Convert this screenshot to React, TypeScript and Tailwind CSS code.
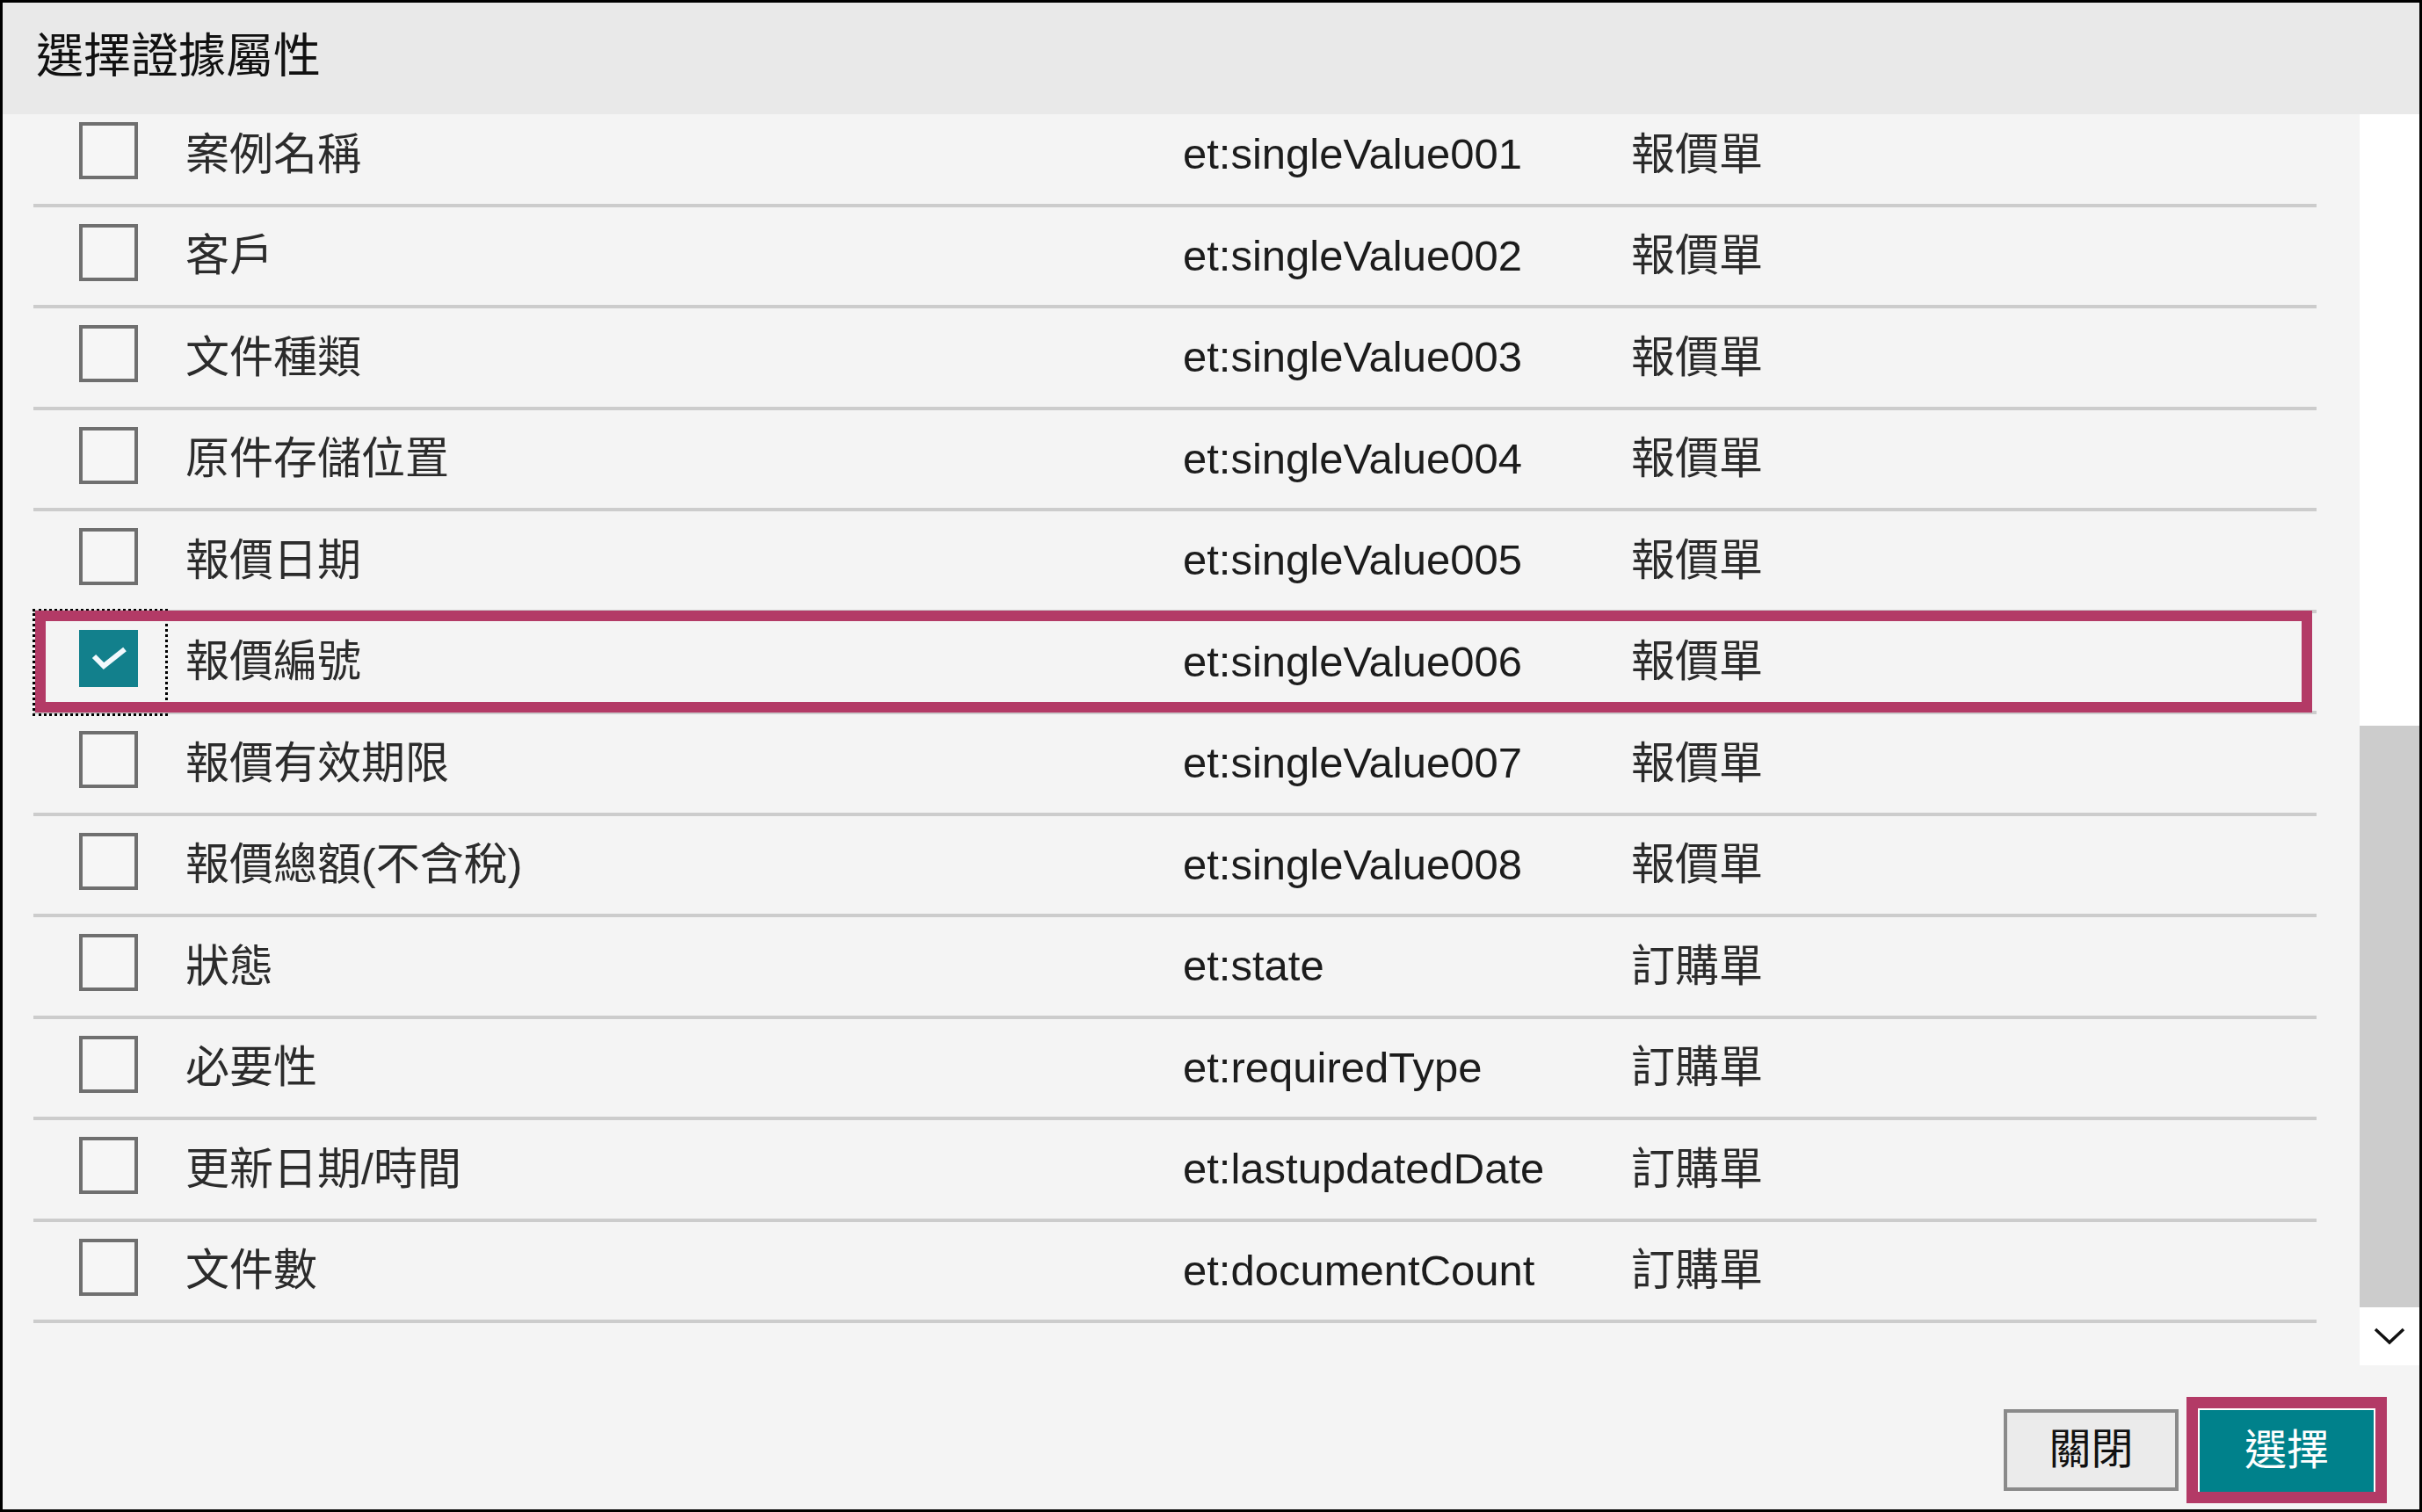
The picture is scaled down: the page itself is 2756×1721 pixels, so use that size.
import React from "react";

type Row = { name: string; key: string; doc: string; checked?: boolean };

const rows: Row[] = [
  { name: "案例名稱", key: "et:singleValue001", doc: "報價單" },
  { name: "客戶", key: "et:singleValue002", doc: "報價單" },
  { name: "文件種類", key: "et:singleValue003", doc: "報價單" },
  { name: "原件存儲位置", key: "et:singleValue004", doc: "報價單" },
  { name: "報價日期", key: "et:singleValue005", doc: "報價單" },
  { name: "報價編號", key: "et:singleValue006", doc: "報價單", checked: true },
  { name: "報價有效期限", key: "et:singleValue007", doc: "報價單" },
  { name: "報價總額(不含稅)", key: "et:singleValue008", doc: "報價單" },
  { name: "狀態", key: "et:state", doc: "訂購單" },
  { name: "必要性", key: "et:requiredType", doc: "訂購單" },
  { name: "更新日期/時間", key: "et:lastupdatedDate", doc: "訂購單" },
  { name: "文件數", key: "et:documentCount", doc: "訂購單" },
];

function Checkbox({ checked }: { checked?: boolean }) {
  if (checked) {
    return (
      <span className="block h-[65px] w-[67px] bg-[#12808c]">
        <svg width="67" height="65" viewBox="0 0 67 65">
          <polyline points="17,30 28,41 52,22" fill="none" stroke="#f2f9fd" strokeWidth="6" />
        </svg>
      </span>
    );
  }
  return <span className="block h-[65px] w-[67px] border-4 border-[#6f6f6f] bg-[#f6f6f6]" />;
}

function PropertyRow({ row }: { row: Row }) {
  return (
    <div className="relative grid h-[115.5px] grid-cols-[173px_1135px_510px_1fr] items-center border-b-4 border-[#cccccc]">
      <div className="self-start pl-[52px] pt-[19px]">
        <Checkbox checked={row.checked} />
      </div>
      <div className="text-[50px] leading-none whitespace-nowrap text-[#2b2b2b]">{row.name}</div>
      <div className="text-[49px] leading-none whitespace-nowrap text-[#1c1c1c]">{row.key}</div>
      <div className="text-[50px] leading-none whitespace-nowrap text-[#2b2b2b]">{row.doc}</div>
      {row.checked && (
        <>
          {/* focus ring on the checkbox cell */}
          <div className="absolute left-[-1px] top-[-5px] h-[122px] w-[154px] border-[3px] border-dotted border-black" />
          {/* highlight annotation */}
          <div className="absolute bottom-[-2px] left-[2px] right-[5px] top-[-3px] border-[12px] border-[#b33a66]" />
        </>
      )}
    </div>
  );
}

export default function App() {
  return (
    <div className="flex h-[1721px] w-[2756px] flex-col border-[3px] border-black bg-[#f4f4f4] font-['Liberation_Sans','Noto_Sans_CJK_TC',sans-serif]">
      <div className="flex h-[127px] shrink-0 items-center bg-[#e9e9e9] pb-[6px] pl-[38px]">
        <h1 className="text-[54px] leading-none text-[#111]">選擇證據屬性</h1>
      </div>

      <div className="flex h-[1424px] shrink-0">
        <div className="flex-1 overflow-hidden pl-[35px] pr-[49px]">
          <div className="-mt-[10px]">
            {rows.map((r) => (
              <PropertyRow key={r.key} row={r} />
            ))}
          </div>
        </div>
        <div className="flex w-[68px] flex-col">
          <div className="flex-1 bg-white" />
          <div className="h-[662px] bg-[#cccccc]" />
          <div className="flex h-[66px] items-center justify-center bg-white">
            <svg width="36" height="24" viewBox="0 0 36 24">
              <polyline points="2,4 18,19 34,4" fill="none" stroke="#111" strokeWidth="3.5" />
            </svg>
          </div>
        </div>
      </div>

      <div className="flex flex-1 items-center justify-end gap-[9px] pr-[37px] pt-[28px]">
        <button
          type="button"
          className="flex h-[93px] w-[199px] items-center justify-center border-4 border-[#8a8a8a] bg-[#ebebeb] text-[48px] leading-none text-[#111]"
        >
          關閉
        </button>
        <div className="border-[13px] border-[#b33a66]">
          <button
            type="button"
            className="flex h-[95px] w-[202px] items-center justify-center border-2 border-b-0 border-white bg-[#00818b] text-[48px] leading-none text-white"
          >
            選擇
          </button>
        </div>
      </div>
    </div>
  );
}
